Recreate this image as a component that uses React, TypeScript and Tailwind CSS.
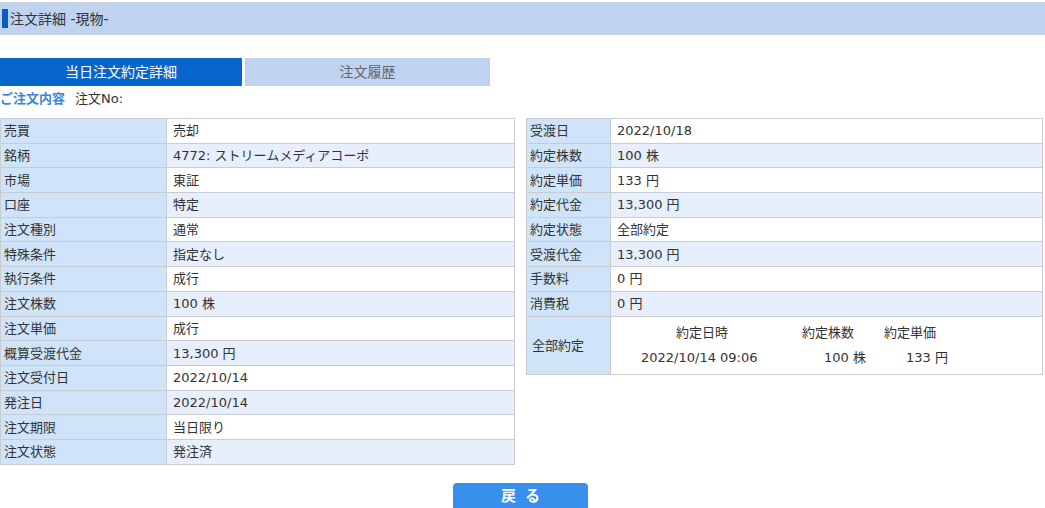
import React from 'react'

const leftRows: [string, string][] = [
  ['売買', '売却'],
  ['銘柄', '4772: ストリームメディアコーポ'],
  ['市場', '東証'],
  ['口座', '特定'],
  ['注文種別', '通常'],
  ['特殊条件', '指定なし'],
  ['執行条件', '成行'],
  ['注文株数', '100 株'],
  ['注文単価', '成行'],
  ['概算受渡代金', '13,300 円'],
  ['注文受付日', '2022/10/14'],
  ['発注日', '2022/10/14'],
  ['注文期限', '当日限り'],
  ['注文状態', '発注済'],
]

const rightRows: [string, string][] = [
  ['受渡日', '2022/10/18'],
  ['約定株数', '100 株'],
  ['約定単価', '133 円'],
  ['約定代金', '13,300 円'],
  ['約定状態', '全部約定'],
  ['受渡代金', '13,300 円'],
  ['手数料', '0 円'],
  ['消費税', '0 円'],
]

function Row({ label, value, i }: { label: string; value: string; i: number }) {
  return (
    <tr className="h-[24.7px]">
      <td className="border border-[#c9ccd1] bg-[#cfe3f9] pl-[3px] align-middle">{label}</td>
      <td
        className={
          i % 2 === 0
            ? 'border border-[#c9ccd1] bg-white pl-[6px] align-middle'
            : 'border border-[#c9ccd1] bg-[#e6effb] pl-[6px] align-middle'
        }
      >
        {value}
      </td>
    </tr>
  )
}

export default function App() {
  return (
    <div className="w-[1045px] h-[508px] overflow-hidden bg-white text-[13px] text-[#333] font-['DejaVu_Sans','Noto_Sans_CJK_JP',sans-serif] leading-none">
      {/* header */}
      <div className="mt-[2px] h-[33px] bg-[#bfd2f0] border-y border-[#c9d1dc] flex items-center">
        <div className="ml-[2px] w-[6px] h-[19px] bg-[#0a5cc2]" />
        <span className="ml-[2px] text-[14px] text-[#333]">注文詳細 -現物-</span>
      </div>

      {/* tabs */}
      <div className="mt-[23px] flex gap-[3px]">
        <div className="w-[242px] h-[28px] bg-[#0766cb] text-white text-[14px] flex items-center justify-center">
          当日注文約定詳細
        </div>
        <div className="w-[245px] h-[28px] bg-[#bfd2f0] text-[#666] text-[14px] flex items-center justify-center">
          注文履歴
        </div>
      </div>

      <div className="mt-[4px] h-[16px] flex items-center">
        <span className="text-[13px] font-bold text-[#3c86d8]">ご注文内容</span>
        <span className="ml-[10px] text-[13px]">注文No:</span>
      </div>

      <div className="mt-[12px] flex items-start gap-[11px]">
        <table className="w-[515px] border-collapse">
          <colgroup>
            <col className="w-[166px]" />
            <col />
          </colgroup>
          <tbody>
            {leftRows.map(([l, v], i) => (
              <Row key={l} label={l} value={v} i={i} />
            ))}
          </tbody>
        </table>

        <table className="w-[517px] border-collapse">
          <colgroup>
            <col className="w-[84px]" />
            <col />
          </colgroup>
          <tbody>
            {rightRows.map(([l, v], i) => (
              <Row key={l} label={l} value={v} i={i} />
            ))}
            <tr className="h-[58px]">
              <td className="border border-[#c9ccd1] bg-[#cfe3f9] pl-[5px] align-middle">全部約定</td>
              <td className="border border-[#c9ccd1] bg-white align-middle">
                <div className="grid grid-cols-[191px_82px_1fr] gap-y-[12px] whitespace-nowrap">
                  <span className="pl-[65px]">約定日時</span>
                  <span>約定株数</span>
                  <span>約定単価</span>
                  <span className="pl-[30px]">2022/10/14 09:06</span>
                  <span className="pl-[22px]">100 株</span>
                  <span className="pl-[22px]">133 円</span>
                </div>
              </td>
            </tr>
          </tbody>
        </table>
      </div>

      <div className="mt-[18px] flex justify-center">
        <div className="ml-[-4px] w-[135px] h-[30px] rounded-[4px] bg-[#3690ec] text-white font-bold text-[15px] flex items-start justify-center pt-[6px] pl-[2px] tracking-[2px]">
          戻 る
        </div>
      </div>
    </div>
  )
}
